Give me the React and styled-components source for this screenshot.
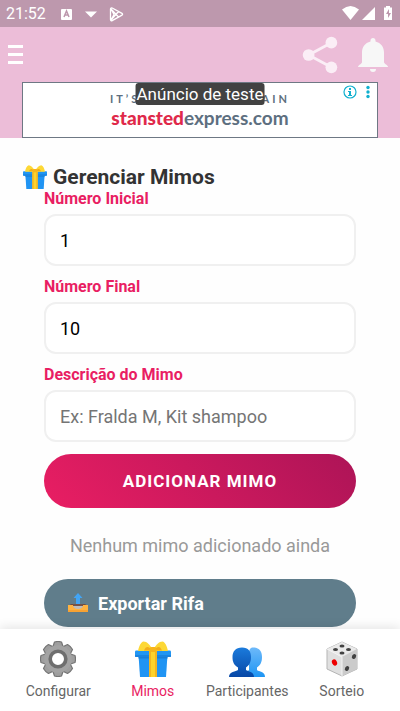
import React, { useState } from "react";
import styled, { createGlobalStyle, css } from "styled-components";

const TABS = [
    { id: "configurar", label: "Configurar", Icon: GearIcon },
    { id: "mimos", label: "Mimos", Icon: GiftIcon },
    { id: "participantes", label: "Participantes", Icon: PeopleIcon },
    { id: "sorteio", label: "Sorteio", Icon: DiceIcon },
];

function App() {
    const [tab, setTab] = useState("mimos");
    const [first, setFirst] = useState("1");
    const [last, setLast] = useState("10");
    const [description, setDescription] = useState("");

    return (
        <Screen>
            <GlobalStyle />
            <StatusBar>
                <span>21:52</span>
                <StatusLeft><StatusGlyphs /></StatusLeft>
                <SignalGlyphs />
            </StatusBar>
            <Header>
                <Toolbar>
                    <ToolButton aria-label="Menu"><MenuIcon /></ToolButton>
                    <ToolGroup>
                        <ToolButton aria-label="Compartilhar"><ShareIcon /></ToolButton>
                        <ToolButton aria-label="Notificações"><BellIcon /></ToolButton>
                    </ToolGroup>
                </Toolbar>
                <Ad>
                    <AdBody href="#">
                        <AdTagline><span>IT’S</span><span>AIN</span></AdTagline>
                        <AdBrand><b>stansted</b>express.com</AdBrand>
                    </AdBody>
                    <AdTag>Anúncio de teste</AdTag>
                    <AdChoices><AdInfoIcon /></AdChoices>
                </Ad>
            </Header>
            <Main>
                <Title><GiftIcon size={24} />Gerenciar Mimos</Title>
                <Form onSubmit={(e) => e.preventDefault()}>
                    <Label htmlFor="first">Número Inicial</Label>
                    <Input id="first" inputMode="numeric" value={first} onChange={(e) => setFirst(e.target.value)} />
                    <Label htmlFor="last">Número Final</Label>
                    <Input id="last" inputMode="numeric" value={last} onChange={(e) => setLast(e.target.value)} />
                    <Label htmlFor="description">Descrição do Mimo</Label>
                    <Input
                        id="description"
                        placeholder="Ex: Fralda M, Kit shampoo"
                        value={description}
                        onChange={(e) => setDescription(e.target.value)}
                    />
                    <AddButton type="submit">ADICIONAR MIMO</AddButton>
                    <Empty>Nenhum mimo adicionado ainda</Empty>
                    <ExportButton type="button"><OutboxIcon />Exportar Rifa</ExportButton>
                </Form>
            </Main>
            <TabBar>
                {TABS.map(({ id, label, Icon }) => (
                    <Tab key={id} $active={id === tab} onClick={() => setTab(id)}>
                        <Icon size={36} />
                        {label}
                    </Tab>
                ))}
            </TabBar>
        </Screen>
    );
}

function StatusGlyphs() {
    return (
        <svg width="64" height="18" viewBox="0 0 64 18" fill="none">
            <rect x="1" y="4" width="11" height="11" rx="1" fill="#fff" />
            <path d="M4 12 6.500 6 9 12M5 10h3" stroke="#bd98ad" strokeWidth="1.500" />
            <path d="M25 6.500h12l-6 6z" fill="#fff" />
            <path
                d="M50.500 4c0-1 .8-1.500 1.700-1l9.800 5.400c.8.5.8 1.300 0 1.700l-9.800 5.500c-.9.500-1.700 0-1.700-1zM51 4l7.500 8M51 15l7.500-8.500M51 4l3 5.500L51 15"
                stroke="#fff"
                strokeWidth="1.300"
            />
        </svg>
    );
}

function SignalGlyphs() {
    return (
        <svg width="52" height="18" viewBox="0 0 52 18" fill="#fff">
            <path d="M0 4.500Q8.500-2.500 17 4.500L8.500 15z" />
            <path d="M33 2v13H20z" />
            <path d="M44 1h4v1.500h2V15h-8V2.500h2z" />
            <path d="m47 4-3 5h2v4l3-5h-2z" fill="#bd98ad" />
        </svg>
    );
}

function MenuIcon() {
    return (
        <svg width="15" height="20" viewBox="0 0 15 20" fill="#fff">
            <path d="M0 0h15v3H0zM0 8h15v3H0zM0 16h15v3H0z" />
        </svg>
    );
}

function ShareIcon() {
    return (
        <svg width="36" height="38" viewBox="0 0 38 40" fill="#fbeef6">
            <path d="M31 7 7 20l24 13" fill="none" stroke="#fbeef6" strokeWidth="3" />
            <circle cx="31" cy="7" r="6.200" />
            <circle cx="7" cy="20" r="6.200" />
            <circle cx="31" cy="33" r="6.200" />
        </svg>
    );
}

function BellIcon() {
    return (
        <svg width="30" height="34" viewBox="0 0 30 34" fill="#f7f7f7">
            <path d="M15 0c1.500 0 2.500 1 2.500 2.500v1C23 5 26 9 26 14.500V24c0 2 4 3 4 5H0c0-2 4-3 4-5v-9.500C4 9 7 5 12.500 3.500v-1C12.500 1 13.500 0 15 0z" />
            <path d="M12 31h6c0 2-1 3-3 3s-3-1-3-3z" />
        </svg>
    );
}

function AdInfoIcon() {
    return (
        <svg width="28" height="14" viewBox="0 0 28 14" fill="#10b0cf">
            <circle cx="7" cy="7" r="6" fill="none" stroke="#10b0cf" strokeWidth="1.200" />
            <path d="M6 3h2v2H6zM5 6h3v4h1v1H5v-1h1V7H5z" />
            <circle cx="25" cy="2.500" r="1.700" />
            <circle cx="25" cy="7" r="1.700" />
            <circle cx="25" cy="11.500" r="1.700" />
        </svg>
    );
}

function GearIcon({ size = 36 }) {
    return (
        <svg width={size} height={size} viewBox="0 0 36 36">
            <g fill="#9e9e9e" stroke="#757575" strokeWidth="1.200" strokeLinejoin="round">
                {[0, 45, 90, 135].map((angle) => (
                    <path key={angle} d="M13 5.500 14.500 1q3.500-1 7 0L23 5.500v25L21.500 35q-3.500 1-7 0L13 30.500z" transform={`rotate(${angle} 18 18)`} />
                ))}
            </g>
            <circle cx="18" cy="18" r="13.800" fill="#a3a3a3" />
            <circle cx="18" cy="18" r="7.800" fill="#fff" stroke="#6e6e6e" strokeWidth="3.600" />
        </svg>
    );
}

function GiftIcon({ size = 36 }) {
    return (
        <svg width={size} height={size} viewBox="0 0 36 36">
            <path d="M3.500 14h29L31 36H5z" fill="#2094f3" />
            <path d="M3.500 15h29v2.500h-29z" fill="#1a7fd6" />
            <rect y="9.500" width="36" height="6.500" rx="1.200" fill="#2196f3" />
            <path d="M0 14h36v1c0 .6-.4 1-1 1H1c-.6 0-1-.4-1-1z" fill="#1a84e0" />
            <path d="M14 9h8v27h-8z" fill="#fdd32c" />
            <path d="M14 9h2v27h-2zM20 9h2v27h-2z" fill="#f4b520" />
            <path d="M3 10C4 5 6 1 8.500.5 12 .5 15 4 17 7.500L14 10zM33 10C32 5 30 1 27.500.5 24 .5 21 4 19 7.500L22 10z" fill="#fdd835" />
            <path d="M9 9.500c1-2.500 2-3.500 3.500-3.500S15 7 16 8l-2 1.500zM27 9.500c-1-2.500-2-3.500-3.500-3.500S21 7 20 8l2 1.500z" fill="#f2ad1b" />
            <rect x="14.500" y="6" width="7" height="5" rx="2" fill="#f7b51b" />
        </svg>
    );
}

function PeopleIcon({ size = 36 }) {
    return (
        <svg width={size} height={size} viewBox="0 0 36 36">
            <defs>
                <linearGradient id="back" x2="0" y2="1">
                    <stop stopColor="#6db9fa" />
                    <stop offset="1" stopColor="#1e95f3" />
                </linearGradient>
                <linearGradient id="front" x2="0" y2="1">
                    <stop stopColor="#1b7bdc" />
                    <stop offset="1" stopColor="#0747a6" />
                </linearGradient>
            </defs>
            <path d="M24 6.500c6.500 0 9 4 9 9.500 0 5-1.500 8-5 10.500V29c2 2 8 1 8 7H12c0-6 6-5 8-7V12c0-3 1-5.500 4-5.500z" fill="url(#back)" />
            <path d="M13 6.500c6.500 0 9 4 9 9.500 0 5-1.500 8-5 10.500V29c2 1.500 8 1.500 8 7H0c0-5.500 7-5.500 9-7v-2.500C5 24 3.500 21 3.500 16c0-5.500 3-9.500 9.500-9.500z" fill="url(#front)" />
        </svg>
    );
}

function DiceIcon({ size = 36 }) {
    return (
        <svg width={size} height={size} viewBox="0 0 36 36">
            <path d="M18 1 33 8v20L18 35 3 28V8z" fill="#e0e0e0" stroke="#b5b5b5" strokeWidth="1" strokeLinejoin="round" />
            <path d="m18 1 15 7-15 8L3 8z" fill="#eaeaea" />
            <path d="M33 8v20l-15 7V16z" fill="#cbcbcb" />
            <path d="m3 8 15 8v19" fill="none" stroke="#f4f4f4" />
            <g fill="#424242">
                <ellipse cx="18" cy="5" rx="2.500" ry="1.600" />
                <ellipse cx="11.500" cy="8.500" rx="2.500" ry="1.600" />
                <ellipse cx="24.500" cy="8.500" rx="2.500" ry="1.600" />
                <ellipse cx="18" cy="12" rx="2.500" ry="1.600" />
                <ellipse cx="30" cy="15.500" rx="2" ry="2.600" transform="rotate(30 30 15.500)" />
                <ellipse cx="23" cy="27.500" rx="2" ry="2.600" transform="rotate(30 23 27.500)" />
            </g>
            <ellipse cx="10.500" cy="21.500" rx="2.500" ry="3.200" fill="#e00" transform="rotate(-25 10.500 21.500)" />
        </svg>
    );
}

function OutboxIcon() {
    return (
        <svg width="20" height="20" viewBox="0 0 20 20">
            <path d="M3 11h14l2.500 2h-19z" fill="#6d4c41" />
            <path d="M0 12h5l2 3h6l2-3h5v7H0z" fill="#ffb341" />
            <path d="M0 17h20v2H0z" fill="#f7a233" />
            <path d="M5 12h10c0 2.500-2 4-5 4s-5-1.500-5-4z" fill="#bdbdbd" />
            <path d="M5 11h10v2H5z" fill="#755348" />
            <path d="m10 0 4.500 5H12v6H8V5H5.500z" fill="#42a5f5" />
        </svg>
    );
}

const GlobalStyle = createGlobalStyle`
  * {
    box-sizing: border-box;
  }
  body {
    margin: 0;
    background: #fefefe;
    font-family: Roboto, "Noto Sans", sans-serif;
  }
  button, input {
    font-family: inherit;
  }
  svg {
    display: block;
    flex-shrink: 0;
  }
`;

const Screen = styled.div`
  display: flex;
  flex-direction: column;
  height: 100vh;
`;

const StatusBar = styled.div`
  display: flex;
  align-items: center;
  height: 27px;
  flex-shrink: 0;
  padding: 0 6px;
  background: #bd98ad;
  color: #fff;
  font-size: 16px;
`;

const StatusLeft = styled.div`
  flex: 1;
  padding-left: 14px;
`;

const Header = styled.header`
  flex-shrink: 0;
  background: #ecbdd8;
`;

const Toolbar = styled.div`
  display: flex;
  align-items: center;
  justify-content: space-between;
  height: 55px;
  padding: 0 12px 0 8px;
`;

const ToolGroup = styled.div`
  display: flex;
  align-items: center;
  gap: 20px;
`;

const ToolButton = styled.button`
  padding: 0;
  border: 0;
  background: none;
  cursor: pointer;
`;

const Ad = styled.div`
  position: relative;
  height: 56px;
  margin: 0 22px;
  border: 1px solid #6e7884;
  background: #fff;
`;

const AdBody = styled.a`
  display: flex;
  flex-direction: column;
  align-items: center;
  padding-top: 9px;
  color: #5d6f80;
  text-decoration: none;
`;

const AdTagline = styled.div`
  display: flex;
  justify-content: space-between;
  width: 180px;
  font: 700 11px/14px Lato, sans-serif;
  letter-spacing: 3px;
`;

const AdBrand = styled.div`
  font: 700 19px/24px Lato, sans-serif;

  b {
    color: #e0294a;
  }
`;

const AdTag = styled.div`
  position: absolute;
  top: 0;
  left: 50%;
  transform: translateX(-50%);
  padding: 0 1px;
  border-radius: 3px;
  background: #424242;
  color: #fff;
  font-size: 17px;
  line-height: 22px;
  white-space: nowrap;
`;

const AdChoices = styled.div`
  position: absolute;
  top: 2px;
  right: 6px;
`;

const Main = styled.main`
  flex: 1;
  min-height: 0;
  overflow: hidden;
  padding-top: 26px;
`;

const Title = styled.h1`
  display: flex;
  align-items: center;
  gap: 6px;
  margin: 0;
  padding-left: 23px;
  color: #333;
  font-size: 21px;
  line-height: 26px;
`;

const Form = styled.form`
  display: flex;
  flex-direction: column;
  padding: 0 44px;
`;

const Label = styled.label`
  margin-bottom: 6px;
  color: #e91e63;
  font-size: 16px;
  font-weight: 700;
  line-height: 18px;
`;

const Input = styled.input`
  width: 100%;
  height: 52px;
  margin-bottom: 12px;
  padding: 0 14px;
  border: 2px solid #f0f0f0;
  border-radius: 12px;
  background: #fff;
  color: #000;
  font-size: 18px;

  &::placeholder {
    color: #757575;
  }
`;

const pill = css`
  border: 0;
  border-radius: 28px;
  color: #fff;
  font-size: 18px;
  font-weight: 700;
  cursor: pointer;
`;

const AddButton = styled.button`
  ${pill}
  height: 54px;
  background: linear-gradient(45deg, #e91e63, #ad1457);
  font-size: 17px;
  letter-spacing: 1px;
`;

const Empty = styled.p`
  margin: 27px 0 22px;
  color: #999;
  font-size: 18px;
  line-height: 22px;
  text-align: center;
`;

const ExportButton = styled.button`
  ${pill}
  display: flex;
  align-items: center;
  gap: 10px;
  height: 48px;
  padding: 0 24px;
  background: #607d8b;
`;

const TabBar = styled.nav`
  display: flex;
  flex-shrink: 0;
  height: 82px;
  padding: 0 11px;
  background: #fff;
  box-shadow: 0 -2px 10px rgba(0, 0, 0, 0.1);
  z-index: 1;
`;

const Tab = styled.button`
  display: flex;
  flex: 1;
  flex-direction: column;
  align-items: center;
  gap: 6px;
  padding: 12px 0 0;
  border: 0;
  background: none;
  color: ${({ $active }) => ($active ? "#e91e63" : "#666")};
  font-size: 14px;
  line-height: 16px;
  cursor: pointer;
`;

export default App;
